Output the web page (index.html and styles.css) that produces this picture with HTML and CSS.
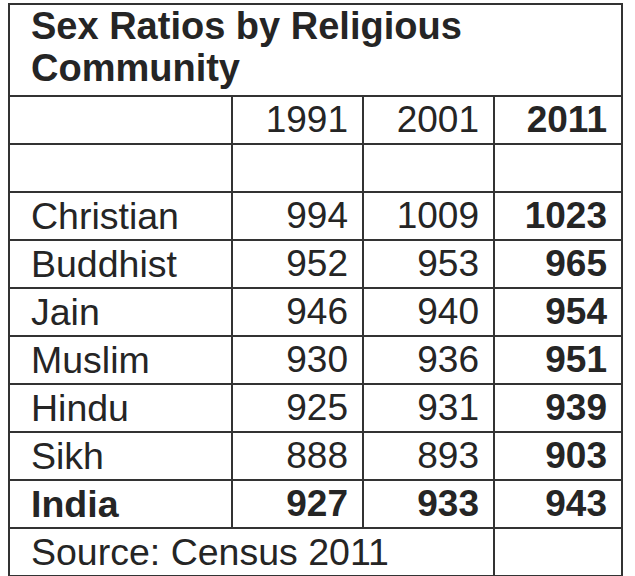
FILE: index.html
```html
<!DOCTYPE html>
<html lang="en">
<head>
<meta charset="utf-8">
<title>Sex Ratios by Religious Community</title>
<link rel="stylesheet" href="styles.css">
</head>
<body>
<table class="ratios">
  <colgroup>
    <col class="col-name">
    <col class="col-year">
    <col class="col-year">
    <col class="col-last">
  </colgroup>
  <tr class="title-row">
    <th colspan="4" class="title">Sex Ratios by Religious<br>Community</th>
  </tr>
  <tr class="row">
    <td class="name"></td>
    <td class="num">1991</td>
    <td class="num">2001</td>
    <td class="num bold">2011</td>
  </tr>
  <tr class="row">
    <td></td><td></td><td></td><td></td>
  </tr>
  <tr class="row">
    <td class="name">Christian</td>
    <td class="num">994</td>
    <td class="num">1009</td>
    <td class="num bold">1023</td>
  </tr>
  <tr class="row">
    <td class="name">Buddhist</td>
    <td class="num">952</td>
    <td class="num">953</td>
    <td class="num bold">965</td>
  </tr>
  <tr class="row">
    <td class="name">Jain</td>
    <td class="num">946</td>
    <td class="num">940</td>
    <td class="num bold">954</td>
  </tr>
  <tr class="row">
    <td class="name">Muslim</td>
    <td class="num">930</td>
    <td class="num">936</td>
    <td class="num bold">951</td>
  </tr>
  <tr class="row">
    <td class="name">Hindu</td>
    <td class="num">925</td>
    <td class="num">931</td>
    <td class="num bold">939</td>
  </tr>
  <tr class="row">
    <td class="name">Sikh</td>
    <td class="num">888</td>
    <td class="num">893</td>
    <td class="num bold">903</td>
  </tr>
  <tr class="row total">
    <td class="name bold">India</td>
    <td class="num bold">927</td>
    <td class="num bold">933</td>
    <td class="num bold">943</td>
  </tr>
  <tr class="row">
    <td colspan="3" class="name">Source: Census 2011</td>
    <td></td>
  </tr>
</table>
</body>
</html>
```

FILE: styles.css
```css
html, body {
  margin: 0;
  padding: 0;
  background: #ffffff;
}

body {
  font-family: "Liberation Sans", Arial, sans-serif;
  color: #252525;
}

.ratios {
  margin: 3px 0 0 8px;
  border-collapse: collapse;
  table-layout: fixed;
  font-size: 37px;
}

.col-name { width: 223px; }
.col-year { width: 131px; }
.col-last { width: 128px; }

.ratios th,
.ratios td {
  border: 2px solid #333333;
  padding: 0;
}

.title-row {
  height: 92px;
}

.ratios .title {
  text-align: left;
  vertical-align: top;
  font-weight: bold;
  font-size: 38px;
  line-height: 42px;
  padding: 0 0 0 21px;
}

.row {
  height: 48px;
}

.ratios .name {
  text-align: left;
  padding-left: 21px;
  font-size: 37.5px;
  white-space: nowrap;
}

.ratios .num {
  text-align: right;
  padding-right: 14px;
}

.ratios .bold {
  font-weight: bold;
}
```
